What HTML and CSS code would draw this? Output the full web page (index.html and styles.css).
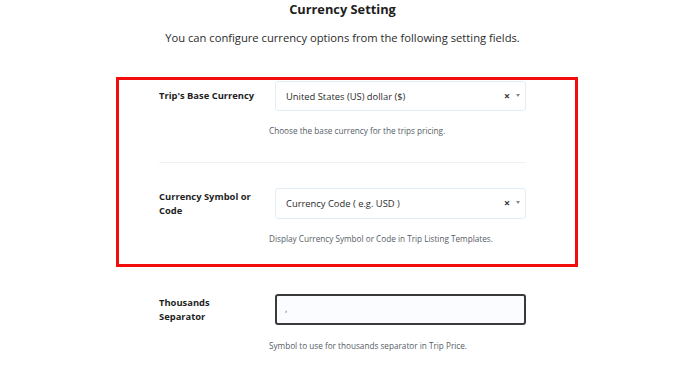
FILE: index.html
```html
<!DOCTYPE html>
<html lang="en">
<head>
<meta charset="utf-8">
<title>Currency Setting</title>
<link rel="stylesheet" href="styles.css">
</head>
<body>
<main class="page">
  <header class="intro">
    <h1 class="title">Currency Setting</h1>
    <p class="subtitle">You can configure currency options from the following setting fields.</p>
  </header>

  <section class="highlight">
    <div class="row row-divider">
      <label class="label">Trip's Base Currency</label>
      <div class="control">
        <div class="select">
          <span class="select-value">United States (US) dollar ($)</span>
          <span class="select-clear">×</span>
          <span class="select-arrow"></span>
        </div>
      </div>
      <p class="help">Choose the base currency for the trips pricing.</p>
    </div>
    <div class="row row-last">
      <label class="label">Currency Symbol or Code</label>
      <div class="control">
        <div class="select">
          <span class="select-value">Currency Code ( e.g. USD )</span>
          <span class="select-clear">×</span>
          <span class="select-arrow"></span>
        </div>
      </div>
      <p class="help">Display Currency Symbol or Code in Trip Listing Templates.</p>
    </div>
  </section>

  <div class="row row-plain">
    <label class="label">Thousands Separator</label>
    <div class="control">
      <div class="text-input">,</div>
    </div>
    <p class="help">Symbol to use for thousands separator in Trip Price.</p>
  </div>
</main>
</body>
</html>
```

FILE: styles.css
```css
* { box-sizing: border-box; }

html, body {
  margin: 0;
  padding: 0;
  background: #ffffff;
}

body {
  font-family: "Open Sans", "Noto Sans", sans-serif;
  color: #1e1e1e;
}

.page {
  width: 367px;
  margin-left: 159px;
}

.intro {
  text-align: center;
}

.title {
  margin: 0;
  font-size: 12.8px;
  line-height: 18px;
  font-weight: 700;
  color: #1e1e1e;
}

.subtitle {
  margin: 11px -20px 0;
  font-size: 11.2px;
  line-height: 18px;
  color: #2b2b2b;
}

.highlight {
  margin: 30px -52px 0 -43px;
  border: 3px solid #f20d0d;
  padding: 1px 49px 0 40px;
}

.row {
  display: grid;
  grid-template-columns: 110px 257px;
  align-items: center;
}

.row-divider {
  padding-bottom: 24px;
  border-bottom: 1px solid #f0f0f0;
}

.row-last {
  padding-top: 25px;
  padding-bottom: 18px;
}

.row-plain {
  margin-top: 27px;
}

.label {
  grid-column: 1;
  grid-row: 1;
  max-width: 97px;
  font-size: 9.4px;
  line-height: 14px;
  font-weight: 700;
  color: #1e1e1e;
}

.control {
  grid-column: 2;
  grid-row: 1;
  padding-left: 6px;
}

.help {
  grid-column: 2;
  grid-row: 2;
  margin: 13px 0 0;
  font-size: 8.2px;
  line-height: 14px;
  color: #555d66;
}

.row-plain .help {
  margin-top: 14px;
}

.select {
  display: flex;
  align-items: center;
  height: 30px;
  padding: 0 5px 0 10px;
  border: 1px solid #e3edf5;
  border-radius: 3px;
  background: #ffffff;
}

.row-last .select {
  height: 31px;
}

.select-value {
  flex: 1;
  font-size: 9.4px;
  color: #2c2c2c;
  white-space: nowrap;
}

.select-clear {
  font-size: 10.5px;
  font-weight: 700;
  color: #333;
  margin-right: 6px;
  line-height: 1;
}

.select-arrow {
  width: 0;
  height: 0;
  border-left: 2.5px solid transparent;
  border-right: 2.5px solid transparent;
  border-top: 3.5px solid #888;
  margin-top: -2px;
}

.text-input {
  height: 31px;
  border: 2px solid #3a3a3a;
  border-radius: 3px;
  background: #fbfcff;
  padding: 6px 8px 0;
  font-size: 9px;
  line-height: 14px;
  color: #666;
}
```
